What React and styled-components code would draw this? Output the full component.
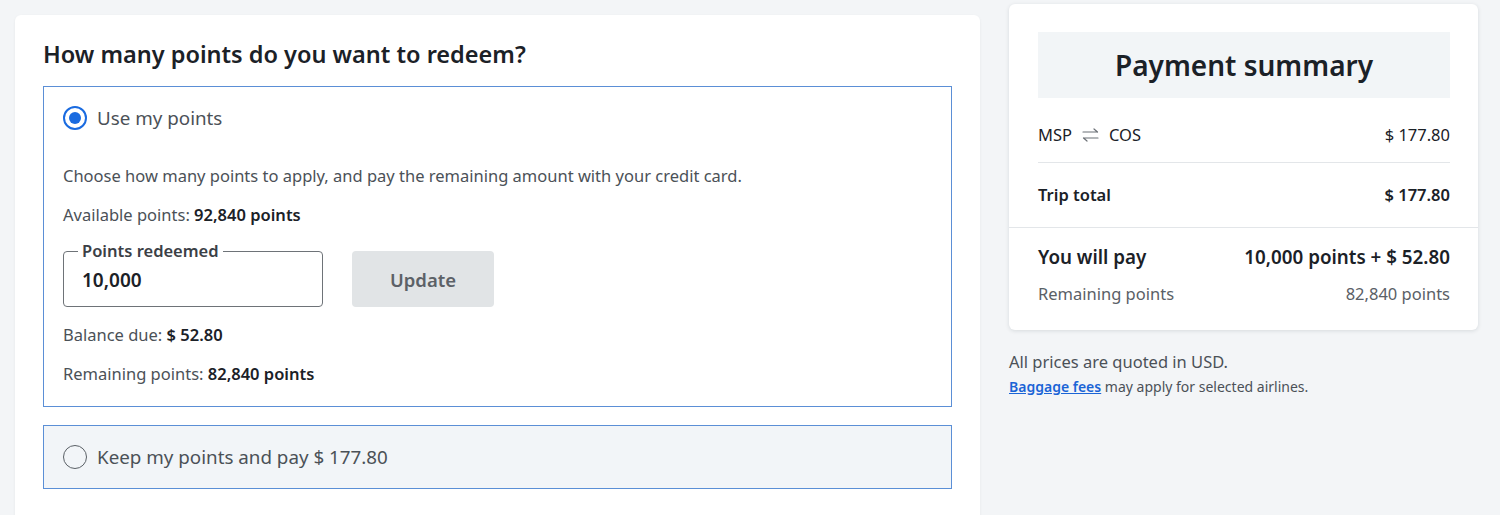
import React from "react";
import styled, { createGlobalStyle } from "styled-components";

const GlobalStyle = createGlobalStyle`
  * { box-sizing: border-box; }
  body {
    margin: 0;
    background: #f3f5f7;
    font-family: "Noto Sans", "Open Sans", sans-serif;
    color: #1b2127;
  }
`;

const Page = styled.div`
  display: flex;
  align-items: flex-start;
  gap: 29px;
  padding: 4px 22px 0 15px;
  height: 515px;
  overflow: hidden;
`;

const MainCard = styled.section`
  width: 965px;
  margin-top: 11px;
  min-height: 560px;
  background: #fff;
  border-radius: 6px;
  box-shadow: 0 1px 3px rgba(20, 30, 40, 0.06);
  padding: 24px 28px;
`;

const Heading = styled.h2`
  margin: 0 0 17px;
  font-size: 23.5px;
  line-height: 30px;
  font-weight: 600;
  color: #1b2127;
`;

const Option = styled.div`
  border: 1px solid #5b8fd6;
  background: ${({ $muted }) => ($muted ? "#f2f5f8" : "#fff")};
  padding: 18px 19px ${({ $muted }) => ($muted ? 18 : 20)}px;
  & + & {
    margin-top: 18px;
  }
`;

const RadioRow = styled.label`
  display: flex;
  align-items: center;
  gap: 10px;
  font-size: 18.8px;
  line-height: 26px;
  color: #4b5157;
`;

const Radio = styled.span`
  width: 24px;
  height: 24px;
  border-radius: 50%;
  border: ${({ $checked }) =>
    $checked ? "2px solid #1a6be0" : "1.5px solid #5a6066"};
  display: flex;
  align-items: center;
  justify-content: center;
  flex-shrink: 0;
  &::after {
    content: "";
    width: 12px;
    height: 12px;
    border-radius: 50%;
    background: ${({ $checked }) => ($checked ? "#1a6be0" : "transparent")};
  }
`;

const Text = styled.p`
  margin: ${({ $mt }) => $mt || 0}px 0 0;
  font-size: 16.5px;
  line-height: 24px;
  color: #4b5157;

  b {
    font-weight: 600;
    color: #1b2127;
  }
`;

const InputRow = styled.div`
  display: flex;
  align-items: flex-end;
  gap: 29px;
  margin-top: 17px;
`;

const Field = styled.fieldset`
  margin: 0;
  width: 260px;
  height: 63px;
  border: 1px solid #6e7378;
  border-radius: 4px;
  padding: 0 18px;
  display: flex;
  align-items: center;
`;

const Legend = styled.legend`
  padding: 0 4px;
  margin-left: -4px;
  font-size: 16.5px;
  line-height: 14px;
  font-weight: 600;
  color: #3b4046;
`;

const Value = styled.span`
  font-size: 19px;
  font-weight: 600;
  color: #1b2127;
  margin-top: -4px;
`;

const UpdateButton = styled.button`
  width: 142px;
  height: 56px;
  border: none;
  border-radius: 4px;
  background: #e1e4e6;
  color: #5c6167;
  font-family: inherit;
  font-size: 18.5px;
  font-weight: 600;
`;

const Side = styled.aside`
  width: 469px;
`;

const SummaryCard = styled.div`
  background: #fff;
  border-radius: 6px;
  box-shadow: 0 1px 4px rgba(20, 30, 40, 0.12);
`;

const SummaryTop = styled.div`
  padding: 28px 28px 0 29px;
`;

const SummaryHeader = styled.h3`
  margin: 0 0 10px;
  height: 66px;
  background: #f2f5f7;
  display: flex;
  align-items: center;
  justify-content: center;
  font-size: 28px;
  font-weight: 600;
  color: #1b2127;
`;

const Row = styled.div`
  display: flex;
  justify-content: space-between;
  align-items: center;
  padding: ${({ $pad }) => $pad || "15px 0"};
  font-size: ${({ $large }) => ($large ? 18.8 : 16.5)}px;
  line-height: ${({ $large }) => ($large ? 26 : 24)}px;
  font-weight: ${({ $bold }) => ($bold ? 600 : 400)};
  color: ${({ $muted }) => ($muted ? "#5a6066" : "#1b2127")};
  border-bottom: ${({ $line }) => ($line ? "1px solid #e3e6e9" : "none")};
`;

const Route = styled.span`
  display: flex;
  align-items: center;
  gap: 10px;
`;

const SummaryBottom = styled.div`
  border-top: 1px solid #e3e6e9;
  padding: 16px 28px 24px 29px;
`;

const Note = styled.p`
  margin: ${({ $mt }) => $mt}px 0 0;
  font-size: ${({ $size }) => $size}px;
  line-height: ${({ $size }) => ($size > 15 ? 24 : 20)}px;
  color: #4b5157;

  a {
    color: #1a64d6;
    font-weight: 600;
    text-decoration: underline;
  }
`;

const SwapIcon = () => (
  <svg width="17" height="14" viewBox="0 0 17 14" fill="none" stroke="#6b7076" strokeWidth="1.2" strokeLinecap="round" strokeLinejoin="round">
    <path d="M1 4h14.5M12 1l3.5 3" />
    <path d="M16 10H1.5M5 13l-3.5-3" />
  </svg>
);

export default function App() {
  return (
    <>
      <GlobalStyle />
      <Page>
        <MainCard>
          <Heading>How many points do you want to redeem?</Heading>
          <Option>
            <RadioRow>
              <Radio $checked />
              Use my points
            </RadioRow>
            <Text $mt={33}>
              Choose how many points to apply, and pay the remaining amount with your credit card.
            </Text>
            <Text $mt={15}>
              Available points: <b>92,840 points</b>
            </Text>
            <InputRow>
              <Field>
                <Legend>Points redeemed</Legend>
                <Value>10,000</Value>
              </Field>
              <UpdateButton>Update</UpdateButton>
            </InputRow>
            <Text $mt={16}>
              Balance due: <b>$ 52.80</b>
            </Text>
            <Text $mt={15}>
              Remaining points: <b>82,840 points</b>
            </Text>
          </Option>
          <Option $muted>
            <RadioRow>
              <Radio />
              Keep my points and pay $ 177.80
            </RadioRow>
          </Option>
        </MainCard>
        <Side>
          <SummaryCard>
            <SummaryTop>
              <SummaryHeader>Payment summary</SummaryHeader>
              <Row $line>
                <Route>
                  MSP <SwapIcon /> COS
                </Route>
                <span>$ 177.80</span>
              </Row>
              <Row $bold $pad="20px 0">
                <span>Trip total</span>
                <span>$ 177.80</span>
              </Row>
            </SummaryTop>
            <SummaryBottom>
              <Row $bold $large $pad="0">
                <span>You will pay</span>
                <span>10,000 points + $ 52.80</span>
              </Row>
              <Row $muted $pad="12px 0 0">
                <span>Remaining points</span>
                <span>82,840 points</span>
              </Row>
            </SummaryBottom>
          </SummaryCard>
          <Note $size={16.5} $mt={20}>All prices are quoted in USD.</Note>
          <Note $size={14} $mt={3}>
            <a href="#">Baggage fees</a> may apply for selected airlines.
          </Note>
        </Side>
      </Page>
    </>
  );
}
